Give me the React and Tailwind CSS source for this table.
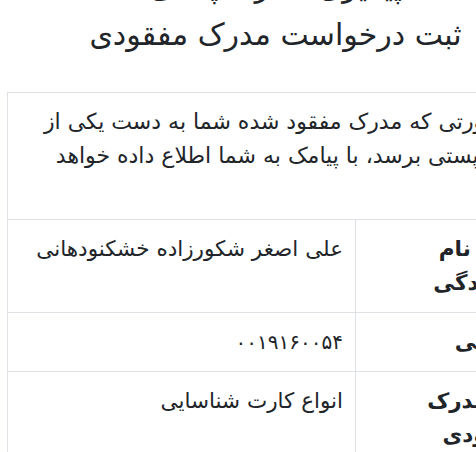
export default function App() {
  const font = { fontFamily: '"DejaVu Sans", "Noto Sans", sans-serif' };
  const cell = "border border-[#dee2e6] p-3 text-right align-top";
  return (
    <div className="w-[551px] bg-white text-[#212529] overflow-hidden" style={font} dir="rtl">
      <div className="mt-[-34px] text-center text-[30px] leading-[42px]">پیگیری مدارک پستی</div>
      <h1 className="text-center text-[30px] leading-[42px] font-normal mt-[6px]">ثبت درخواست مدرک مفقودی</h1>
      <div className="px-[7px] mt-[36px]">
        <table className="w-full border-collapse text-[21.5px] leading-[34px]">
          <tbody>
            <tr>
              <td colSpan={2} className={cell + " text-[22px]"}>
                در صورتی که مدرک مفقود شده شما به دست یکی از
                <br />
                دفاتر پستی برسد، با پیامک به شما اطلاع داده خواهد
                <br />
                شد.
              </td>
            </tr>
            <tr>
              <th className={cell + " font-bold w-[188px]"}>نام و نام خانوادگی</th>
              <td className={cell}>علی اصغر شکورزاده خشکنودهانی</td>
            </tr>
            <tr>
              <th className={cell + " font-bold"}>کد ملی</th>
              <td className={cell + " text-[20px]"}>۰۰۱۹۱۶۰۰۵۴</td>
            </tr>
            <tr>
              <th className={cell + " font-bold"}>نوع مدرک مفقودی</th>
              <td className={cell}>انواع کارت شناسایی</td>
            </tr>
          </tbody>
        </table>
      </div>
    </div>
  );
}
